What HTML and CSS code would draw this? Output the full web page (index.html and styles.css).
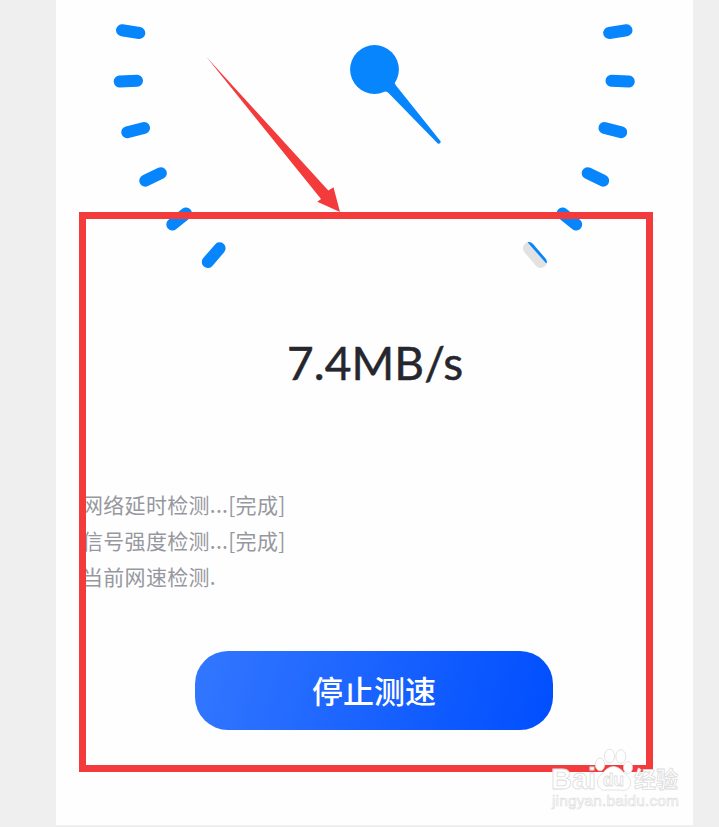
FILE: index.html
```
<!DOCTYPE html>
<html lang="zh-CN">
<head>
    <meta charset="UTF-8">
    <meta name="viewport" content="width=device-width, initial-scale=1.0">
    <title>网络测速</title>
    <link rel="stylesheet" href="styles.css">
</head>
<body>
    <main class="page">
        <svg class="gauge" viewBox="56 0 637 280" width="637" height="280">
            <g class="ticks">
                <path d="M122 30.3L139.3 33M119.7 81.5L137 80.7M127.3 132.2L144 128M145.3 180.7L160.8 173.2M172.3 224.5L186 213.5M207.8 262L219.6 248.3"/>
                <path d="M626.5 30.3L609.2 33M628.8 81.5L611.5 80.7M621.2 132.2L604.5 128M603.2 180.7L587.7 173.2M576.2 224.5L562.5 213.5"/>
            </g>
            <!-- last tick is only partly filled -->
            <path class="tick-fill" d="M528.9 248.3L540.7 262"/>
            <path class="needle" d="M527.5 242.3Q530.5 241.4 533 244L545.5 258.5Q547.8 261.5 546.3 263.5Z"/>
            <circle class="needle" cx="374.5" cy="69.5" r="24.4"/>
            <path class="needle" d="M383 90L394 80Q394 83 396 85.5L440.8 141.5Q440.5 144.2 438 143.8L389 93.5Q387 91.2 385 91.5Z"/>
        </svg>

        <h1 class="speed">7.4MB/s</h1>

        <ul class="log">
            <li>网络延时检测...[完成]</li>
            <li>信号强度检测...[完成]</li>
            <li>当前网速检测.</li>
        </ul>

        <button class="stop" type="button">停止测速</button>

        <div class="mark-box"></div>
        <svg class="mark-arrow" viewBox="200 50 150 165" width="150" height="165">
            <path d="M206.5 57L328.3 190.5L333.5 187.2L340 212L317.3 201.8L321 199Z"/>
        </svg>

        <svg class="watermark" viewBox="545 745 145 70" width="145" height="70">
            <g class="paw">
                <ellipse cx="600" cy="764.5" rx="4.7" ry="6.3"/>
                <ellipse cx="609.5" cy="756" rx="5" ry="6.8"/>
                <ellipse cx="620.8" cy="756.5" rx="5" ry="6.8"/>
                <ellipse cx="628" cy="767.5" rx="4.5" ry="6"/>
                <path d="M597.5 784Q596.5 777 603 773Q607 767 613.5 766.5Q620 767 624 773Q632 778 630.5 785Q628 792 620 790H608Q600 792 597.5 784Z"/>
            </g>
            <text class="brand" x="551" y="789" textLength="45" lengthAdjust="spacingAndGlyphs">Bai</text>
            <text class="du" x="603" y="786" textLength="21" lengthAdjust="spacingAndGlyphs">du</text>
            <text class="brand-cn" x="634" y="787" textLength="44">经验</text>
            <text class="site" x="552" y="806" textLength="127">jingyan.baidu.com</text>
        </svg>
    </main>
</body>
</html>
```
FILE: styles.css
```
* {
    box-sizing: border-box;
}

body {
    margin: 0;
    background-color: #efefef;
    font-family: "Noto Sans CJK SC", sans-serif;
}

.page {
    position: relative;
    display: flex;
    flex-direction: column;
    width: 637px;
    height: 825px;
    margin-left: 56px;
    background-color: #fefefe;
}

.gauge {
    display: block;
}

.ticks,
.tick-fill {
    fill: none;
    stroke: #0685fc;
    stroke-width: 12;
    stroke-linecap: round;
}

.tick-fill {
    stroke: #e2e2e2;
}

.needle {
    fill: #0685fc;
}

.speed {
    margin: 53px 0 0;
    height: 60px;
    padding-left: 231px;
    color: #26272e;
    font-family: Lato, sans-serif;
    font-size: 46px;
    font-weight: 400;
    line-height: 60px;
    letter-spacing: 0.1px;
    -webkit-text-stroke: 0.5px #26272e;
}

.log {
    margin: 93px 0 0;
    padding: 0 0 0 26px;
    list-style: none;
    color: #97989f;
    font-size: 21px;
    line-height: 36px;
    letter-spacing: 0.3px;
}

.stop {
    width: 358px;
    height: 79px;
    margin: 57px 0 0 139px;
    padding: 0 0 2px;
    border: 0;
    border-radius: 33px;
    background: linear-gradient(105deg, #3377ff, #004eff);
    color: #fff;
    font-family: inherit;
    font-size: 31px;
    font-weight: 500;
}

/* red highlight drawn over the screen */
.mark-box {
    position: absolute;
    left: 23px;
    top: 212px;
    width: 574px;
    height: 560px;
    border: 7px solid #f43b3c;
}

.mark-arrow {
    position: absolute;
    left: 144px;
    top: 50px;
    fill: #f43b3c;
}

.watermark {
    position: absolute;
    left: 489px;
    top: 745px;
    fill: #fff;
    stroke: #dcdcdc;
    stroke-width: 0.8;
    font-family: "Liberation Sans", sans-serif;
}

.brand {
    font-size: 29px;
    font-weight: 700;
}

.du {
    font-size: 18px;
    font-weight: 700;
}

.brand-cn {
    font-family: "Noto Sans CJK SC", sans-serif;
    font-size: 22px;
    font-weight: 700;
}

.site {
    font-size: 15.5px;
    stroke-width: 0.6;
}
```
